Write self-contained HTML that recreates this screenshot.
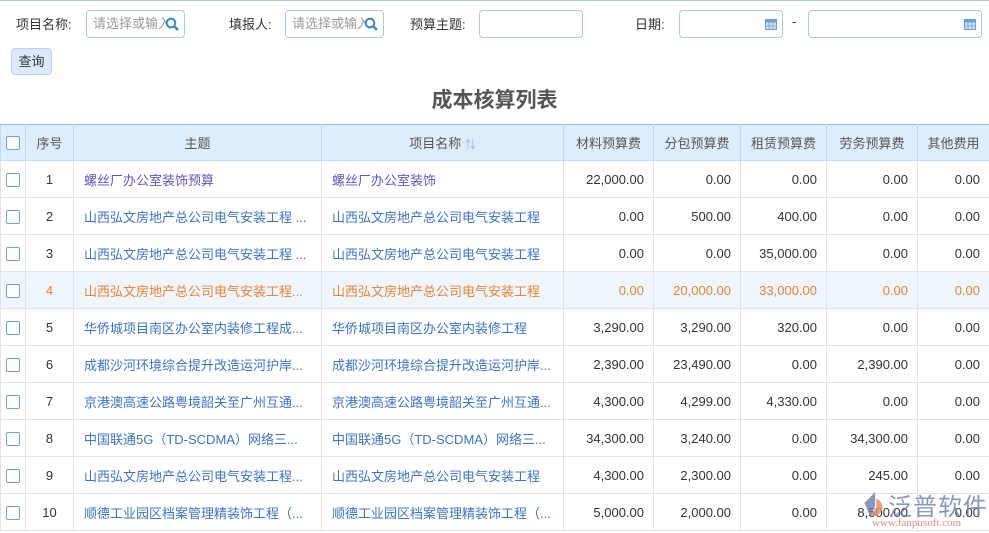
<!DOCTYPE html>
<html><head><meta charset="utf-8"><style>
*{box-sizing:border-box;margin:0;padding:0}
body{width:989px;height:532px;overflow:hidden;background:#fff;font-family:"Liberation Sans","Noto Sans CJK SC",sans-serif;font-size:13px;color:#333;position:relative;border-top:1px solid #a9cbe8}
.lbl{position:absolute;top:13px;font-size:13px;color:#333}
.inp{position:absolute;top:9px;height:28px;border:1px solid #a9c6e6;border-radius:4px;background:#fff;color:#999;font-size:13px;line-height:26px;padding-left:6px;overflow:hidden;white-space:nowrap}
.btn{position:absolute;left:11px;top:47px;width:41px;height:27px;background:#dbe9f8;border:1px solid #b9d3ee;border-radius:4px;font-size:13px;line-height:25px;text-align:center;color:#333}
h1{position:absolute;top:83px;left:0;width:989px;text-align:center;font-size:21px;font-weight:bold;color:#555}
table{position:absolute;top:123px;left:0;border-collapse:collapse;table-layout:fixed;width:989px}
th{background:#deedfb;height:36px;font-weight:normal;color:#555;border:1px solid #c3d9ee;border-top:1px solid #8cbbe6;font-size:13px}
td{height:37px;border:1px solid #e2e2e2;font-size:13px;white-space:nowrap;overflow:hidden;text-overflow:ellipsis}
td.n{text-align:right;padding-right:9px;color:#333}
td.c{text-align:center}
td.l{padding-left:10px;color:#3b73c4}
.cb{display:inline-block;width:14px;height:14px;border:1px solid #6d9fd6;border-radius:2px;background:#fff;vertical-align:middle}
tr.h td{background:#eef5fc;color:#e8832f}
tr.h td.l{color:#e8832f}
</style></head><body>
<span class="lbl" style="left:16px">项目名称:</span>
<div class="inp" style="left:86px;width:99px">请选择或输入<svg style="position:absolute;right:4px;top:6px" width="15" height="15" viewBox="0 0 15 15"><circle cx="6" cy="6" r="4.3" fill="none" stroke="#3a84d6" stroke-width="2"/><line x1="9.2" y1="9.2" x2="13" y2="13" stroke="#3a84d6" stroke-width="2.4"/></svg></div>
<span class="lbl" style="left:229px">填报人:</span>
<div class="inp" style="left:285px;width:99px">请选择或输入<svg style="position:absolute;right:4px;top:6px" width="15" height="15" viewBox="0 0 15 15"><circle cx="6" cy="6" r="4.3" fill="none" stroke="#3a84d6" stroke-width="2"/><line x1="9.2" y1="9.2" x2="13" y2="13" stroke="#3a84d6" stroke-width="2.4"/></svg></div>
<span class="lbl" style="left:410px">预算主题:</span>
<div class="inp" style="left:479px;width:104px"></div>
<span class="lbl" style="left:635px">日期:</span>
<div class="inp" style="left:679px;width:104px"><svg style="position:absolute;right:5px;top:7px" width="12" height="12" viewBox="0 0 12 12"><rect x="0.5" y="1.5" width="11" height="10" fill="#cfe0f5" stroke="#6a9fd8"/><rect x="0.5" y="1.5" width="11" height="3" fill="#6a9fd8"/><path d="M4 4.5v7M8 4.5v7M0.5 8h11" stroke="#6a9fd8" stroke-width="0.7"/></svg></div>
<span class="lbl" style="left:792px">-</span>
<div class="inp" style="left:808px;width:174px"><svg style="position:absolute;right:5px;top:7px" width="12" height="12" viewBox="0 0 12 12"><rect x="0.5" y="1.5" width="11" height="10" fill="#cfe0f5" stroke="#6a9fd8"/><rect x="0.5" y="1.5" width="11" height="3" fill="#6a9fd8"/><path d="M4 4.5v7M8 4.5v7M0.5 8h11" stroke="#6a9fd8" stroke-width="0.7"/></svg></div>
<div class="btn">查询</div>
<h1>成本核算列表</h1>
<table>
<colgroup><col style="width:25px"><col style="width:48px"><col style="width:248px"><col style="width:242px"><col style="width:90px"><col style="width:87px"><col style="width:86px"><col style="width:91px"><col style="width:72px"></colgroup>
<tr><th><span class="cb"></span></th><th>序号</th><th>主题</th><th>项目名称 <span style="color:#aac;font-size:11px">⇅</span></th><th>材料预算费</th><th>分包预算费</th><th>租赁预算费</th><th>劳务预算费</th><th>其他费用</th></tr>
<tr><td class="c"><span class="cb"></span></td><td class="c">1</td><td class="l" style="color:#6352c0">螺丝厂办公室装饰预算</td><td class="l" style="color:#5a58c4">螺丝厂办公室装饰</td><td class="n">22,000.00</td><td class="n">0.00</td><td class="n">0.00</td><td class="n">0.00</td><td class="n">0.00</td></tr>
<tr><td class="c"><span class="cb"></span></td><td class="c">2</td><td class="l">山西弘文房地产总公司电气安装工程 ...</td><td class="l">山西弘文房地产总公司电气安装工程</td><td class="n">0.00</td><td class="n">500.00</td><td class="n">400.00</td><td class="n">0.00</td><td class="n">0.00</td></tr>
<tr><td class="c"><span class="cb"></span></td><td class="c">3</td><td class="l">山西弘文房地产总公司电气安装工程 ...</td><td class="l">山西弘文房地产总公司电气安装工程</td><td class="n">0.00</td><td class="n">0.00</td><td class="n">35,000.00</td><td class="n">0.00</td><td class="n">0.00</td></tr>
<tr class="h"><td class="c"><span class="cb"></span></td><td class="c">4</td><td class="l">山西弘文房地产总公司电气安装工程...</td><td class="l">山西弘文房地产总公司电气安装工程</td><td class="n">0.00</td><td class="n">20,000.00</td><td class="n">33,000.00</td><td class="n">0.00</td><td class="n">0.00</td></tr>
<tr><td class="c"><span class="cb"></span></td><td class="c">5</td><td class="l">华侨城项目南区办公室内装修工程成...</td><td class="l">华侨城项目南区办公室内装修工程</td><td class="n">3,290.00</td><td class="n">3,290.00</td><td class="n">320.00</td><td class="n">0.00</td><td class="n">0.00</td></tr>
<tr><td class="c"><span class="cb"></span></td><td class="c">6</td><td class="l">成都沙河环境综合提升改造运河护岸...</td><td class="l">成都沙河环境综合提升改造运河护岸...</td><td class="n">2,390.00</td><td class="n">23,490.00</td><td class="n">0.00</td><td class="n">2,390.00</td><td class="n">0.00</td></tr>
<tr><td class="c"><span class="cb"></span></td><td class="c">7</td><td class="l">京港澳高速公路粤境韶关至广州互通...</td><td class="l">京港澳高速公路粤境韶关至广州互通...</td><td class="n">4,300.00</td><td class="n">4,299.00</td><td class="n">4,330.00</td><td class="n">0.00</td><td class="n">0.00</td></tr>
<tr><td class="c"><span class="cb"></span></td><td class="c">8</td><td class="l">中国联通5G（TD-SCDMA）网络三...</td><td class="l">中国联通5G（TD-SCDMA）网络三...</td><td class="n">34,300.00</td><td class="n">3,240.00</td><td class="n">0.00</td><td class="n">34,300.00</td><td class="n">0.00</td></tr>
<tr><td class="c"><span class="cb"></span></td><td class="c">9</td><td class="l">山西弘文房地产总公司电气安装工程...</td><td class="l">山西弘文房地产总公司电气安装工程</td><td class="n">4,300.00</td><td class="n">2,300.00</td><td class="n">0.00</td><td class="n">245.00</td><td class="n">0.00</td></tr>
<tr><td class="c"><span class="cb"></span></td><td class="c">10</td><td class="l">顺德工业园区档案管理精装饰工程（...</td><td class="l">顺德工业园区档案管理精装饰工程（...</td><td class="n">5,000.00</td><td class="n">2,000.00</td><td class="n">0.00</td><td class="n">8,500.00</td><td class="n">0.00</td></tr>
</table>
<div style="position:absolute;left:860px;top:486px;width:129px;height:46px;opacity:.8">
<svg style="position:absolute;left:0;top:3px" width="26" height="30" viewBox="0 0 24 28"><path d="M14 2 L4 12 L10 26 L14 14 Z" fill="#6b7fa8"/><path d="M15 8 A8 8 0 1 1 10 24 L15 16Z" fill="#e58c6a"/></svg>
<span style="position:absolute;left:28px;top:0;font-size:24px;color:#6b7fa8;letter-spacing:1px">泛普软件</span>
<span style="position:absolute;left:12px;top:30px;font-size:11px;color:#e06b5a;font-family:'Liberation Serif',serif">www.fanpusoft.com</span>
</div>
</body></html>
